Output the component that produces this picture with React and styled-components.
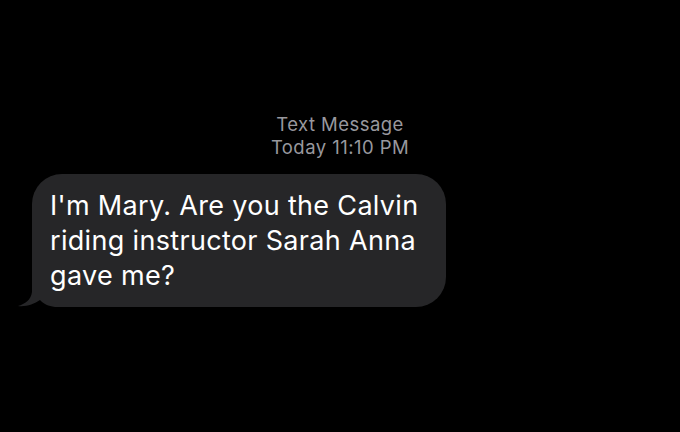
import React from "react";
import styled, { createGlobalStyle } from "styled-components";

const Global = createGlobalStyle`
  html, body { margin: 0; padding: 0; background: #000; }
  body { font-family: Inter, "Noto Sans", "Liberation Sans", sans-serif; -webkit-font-smoothing: antialiased; }
`;

const Screen = styled.div`
  width: 680px;
  height: 432px;
  background: #000;
  display: flex;
  flex-direction: column;
  padding-top: 113px;
  box-sizing: border-box;
  overflow: hidden;
`;

const Stamp = styled.div`
  align-self: center;
  text-align: center;
  color: #98989e;
  font-size: 18.5px;
  letter-spacing: 0.45px;
  line-height: 23px;
  font-weight: 400;
`;

const Row = styled.div`
  display: flex;
  padding-left: 32px;
  margin-top: 15px;
`;

const Bubble = styled.div`
  position: relative;
  isolation: isolate;
  width: 414px;
  box-sizing: border-box;
  padding: 14px 18px 14px 18px;
  background: #262628;
  border-radius: 30px;
  color: #fff;
  font-size: 27px;
  letter-spacing: 0.32px;
  line-height: 35px;
  font-weight: 400;
`;

const Tail = styled.svg`
  position: absolute;
  z-index: -1;
  left: -14px;
  bottom: 0;
  width: 44px;
  height: 39px;
  display: block;
`;

export default function App() {
  return (
    <>
      <Global />
      <Screen>
        <Stamp>
          Text Message
          <br />
          Today 11:10 PM
        </Stamp>
        <Row>
          <Bubble>
            <Tail viewBox="0 0 44 39" aria-hidden="true">
              <path
                d="M14,2 L14,24 C13,32 7,36 0,38 C8,39 16,36 22,32 C26,36 30,38 37,39 L44,39 L44,2 Z"
                fill="#262628"
              />
            </Tail>
            I'm Mary. Are you the Calvin riding instructor Sarah Anna gave me?
          </Bubble>
        </Row>
      </Screen>
    </>
  );
}
